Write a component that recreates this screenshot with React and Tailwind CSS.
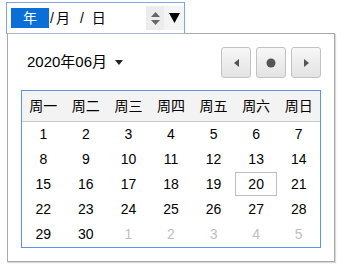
import React from 'react';

const weekdays = ['周一', '周二', '周三', '周四', '周五', '周六', '周日'];

const weeks = [
    [1, 2, 3, 4, 5, 6, 7],
    [8, 9, 10, 11, 12, 13, 14],
    [15, 16, 17, 18, 19, 20, 21],
    [22, 23, 24, 25, 26, 27, 28],
    [29, 30, -1, -2, -3, -4, -5],
];

const NavButton = ({ children }) => (
    <button className="w-[30px] h-[31px] flex items-center justify-center rounded-[3px] border border-[#c2c2c2] bg-gradient-to-b from-[#f7f7f7] to-[#e3e3e3]">
        {children}
    </button>
);

const App = () => {
    return (
        <div className="w-[346px] h-[269px] bg-white pt-[2px] pl-[6px] font-['Liberation_Sans','Noto_Sans_CJK_SC',sans-serif] text-[14px] text-black">
            {/* date input */}
            <div className="relative z-10 w-[179px] h-[32px] flex items-center border border-[#7ea6e6] border-b-[#a9b9d2] bg-white">
                <span className="ml-[4px] w-[38px] h-[20px] flex items-center justify-center bg-[#0a6fd6] text-white">年</span>
                <span className="ml-[1px]">/</span>
                <span className="ml-[2px]">月</span>
                <span className="ml-[10px]">/</span>
                <span className="ml-[8px]">日</span>
                <div className="ml-auto flex h-full items-center">
                    <div className="w-[18px] h-[24px] bg-[#ececec] flex flex-col items-center justify-center gap-[3px]">
                        <svg width="9" height="5" viewBox="0 0 9 5"><path d="M4.5 0 L9 5 L0 5 Z" fill="#666" /></svg>
                        <svg width="9" height="5" viewBox="0 0 9 5"><path d="M0 0 L9 0 L4.5 5 Z" fill="#666" /></svg>
                    </div>
                    <div className="w-[20px] h-[24px] bg-[#f4f4f4] flex items-center justify-center">
                        <svg width="11" height="10" viewBox="0 0 11 10"><path d="M0 0 L11 0 L5.5 10 Z" fill="#000" /></svg>
                    </div>
                </div>
            </div>

            {/* popup */}
            <div className="-mt-px ml-px w-[328px] border border-[#a9a9a9] bg-white p-[13px] shadow-[1px_1px_1px_rgba(0,0,0,0.15)]">
                <div className="flex items-center justify-between">
                    <div className="ml-[6px] flex items-center gap-[8px] text-[15px]">
                        <span>2020年06月</span>
                        <svg width="8" height="5" viewBox="0 0 8 5"><path d="M0 0 L8 0 L4 5 Z" fill="#222" /></svg>
                    </div>
                    <div className="flex gap-[5px]">
                        <NavButton>
                            <svg width="5" height="8" viewBox="0 0 5 8"><path d="M5 0 L5 8 L0 4 Z" fill="#555" /></svg>
                        </NavButton>
                        <NavButton>
                            <svg width="10" height="10" viewBox="0 0 10 10"><circle cx="5" cy="5" r="4.5" fill="#555" /></svg>
                        </NavButton>
                        <NavButton>
                            <svg width="5" height="8" viewBox="0 0 5 8"><path d="M0 0 L5 4 L0 8 Z" fill="#555" /></svg>
                        </NavButton>
                    </div>
                </div>

                <div className="mt-[12px] border border-[#5b93ec]">
                    <div className="grid grid-cols-7 h-[31px] bg-[#f3f3f3] border-b border-[#c8c8c8] items-center">
                        {weekdays.map((d) => (
                            <div key={d} className="text-center">{d}</div>
                        ))}
                    </div>
                    {weeks.map((week, i) => (
                        <div key={i} className="grid grid-cols-7 h-[25px]">
                            {week.map((n) => (
                                <div
                                    key={n}
                                    className={`flex items-center justify-center ${n < 0 ? 'text-[#c0c0c0]' : ''} ${n === 20 ? 'border border-[#bdbdbd] h-[24px]' : ''}`}
                                >
                                    {Math.abs(n)}
                                </div>
                            ))}
                        </div>
                    ))}
                </div>
            </div>
        </div>
    );
};

export default App;
